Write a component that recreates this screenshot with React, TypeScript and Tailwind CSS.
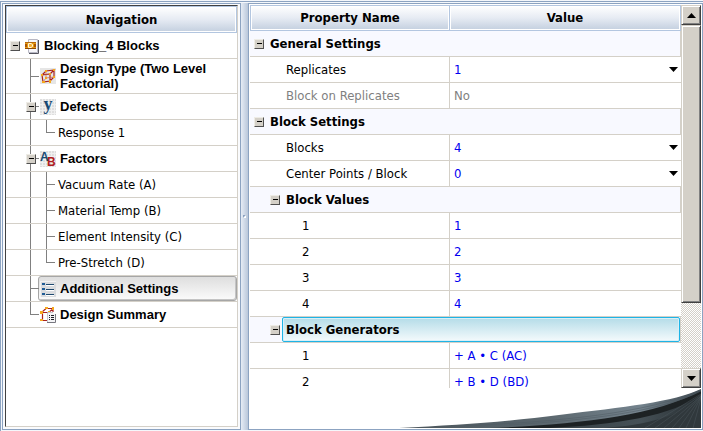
import type { ReactNode } from "react";

const uiFont = "font-['DejaVu_Sans_Condensed','DejaVu_Sans',sans-serif]";
const headerCell =
  "border border-[#b3c6e0] bg-linear-to-b from-white via-[#e6ebf3] to-[#c3cfdf] text-center text-[13px] font-bold shadow-[inset_-1px_-1px_0_#ffffff,inset_1px_1px_0_#ffffff]";

function Toggle({ label }: { label: string }) {
  return (
    <button
      type="button"
      aria-label={`Collapse ${label}`}
      className="flex size-[10px] shrink-0 items-center justify-center border border-t-[#eeece6] border-r-[#505050] border-b-[#505050] border-l-[#eeece6] bg-[#d4d0c8]"
    >
      <span className="h-px w-[5px] bg-black" />
    </button>
  );
}

/* Half-height elbow joining a row to the vertical tree line */
function Elbow({ last = false, children }: { last?: boolean; children?: ReactNode }) {
  return (
    <span className="relative flex w-[9px] shrink-0 flex-col self-stretch">
      <span className="flex-1 border-b border-l border-[#808080]" />
      <span className={last ? "flex-1" : "flex-1 border-l border-[#808080]"} />
      {children && <span className="absolute top-1/2 -left-1 -translate-y-1/2">{children}</span>}
    </span>
  );
}

function Tile() {
  return (
    <>
      <rect width="16" height="16" fill="#dedede" />
      <path
        d="M0 2.5H16M0 5.5H16M0 8.5H16M0 11.5H16M0 14.5H16M2.5 0V16M5.5 0V16M8.5 0V16M11.5 0V16M14.5 0V16"
        stroke="#f0f0f0"
      />
    </>
  );
}

function ProjectIcon() {
  return (
    <svg width="14" height="16" viewBox="0 0 14 16" aria-hidden="true">
      <path d="M3.5 1.5H12.5V14.5H3.5Z" fill="#f7f7fb" stroke="#b8b8c4" />
      <path d="M13.5 2V15.5H4" fill="none" stroke="#55555f" />
      <rect x="0" y="4" width="11" height="7" fill="#e89a10" />
      <rect x="0" y="4" width="11" height="1" fill="#b56a10" />
      <rect x="0" y="10" width="11" height="1" fill="#8f4a08" />
      <rect x="0" y="6" width="2" height="3" fill="#a85408" />
      <rect x="9" y="6" width="2" height="3" fill="#a85408" />
      <path d="M3.5 5.5H6L7.5 6.5V8.5L6 9.5H3.5Z" fill="#f5b030" stroke="#fff6dc" />
    </svg>
  );
}

function CubeIcon() {
  return (
    <svg width="16" height="16" viewBox="0 0 16 16" aria-hidden="true">
      <rect width="16" height="16" fill="#e6e6e6" />
      <path d="M2 7L10 6V13L3 14ZM2 7L6 3L14 2L10 6M14 2V9L10 13" fill="none" stroke="#a82020" strokeWidth="1.2" />
      <path d="M6 3V10L14 9M6 10L3 14" fill="none" stroke="#c86a5a" strokeWidth="0.8" />
      <g fill="#f5a81c">
        <rect x="1" y="6" width="2" height="2" />
        <rect x="9" y="5" width="2" height="2" />
        <rect x="2" y="13" width="3" height="2" />
        <rect x="9" y="12" width="2" height="3" />
        <rect x="5" y="2" width="2" height="2" />
        <rect x="13" y="1" width="2" height="2" />
        <rect x="13" y="8" width="2" height="2" />
        <rect x="5" y="9" width="2" height="2" />
      </g>
    </svg>
  );
}

function ResponseIcon() {
  return (
    <svg width="16" height="16" viewBox="0 0 16 16" aria-hidden="true" className="overflow-visible">
      <Tile />
      <text x="8" y="11" textAnchor="middle" fontFamily="Liberation Serif, serif" fontWeight="bold" fontSize="18" fill="#174a74">
        y
      </text>
    </svg>
  );
}

function FactorsIcon() {
  return (
    <svg width="16" height="16" viewBox="0 0 16 16" aria-hidden="true" className="overflow-visible">
      <Tile />
      <g fontFamily="Liberation Sans, sans-serif" fontWeight="bold" fontSize="12">
        <text x="0" y="10" fill="#174a74">
          A
        </text>
        <text x="7" y="15" fill="#b01c20">
          B
        </text>
      </g>
    </svg>
  );
}

function SettingsIcon() {
  return (
    <svg width="16" height="16" viewBox="0 0 16 16" aria-hidden="true">
      <rect width="16" height="16" fill="#d9dbde" />
      <path d="M0 .5H16M.5 0V16" stroke="#f2f2f2" />
      <path d="M6 3.5H14M6 8.5H14M6 13.5H14" stroke="#1f4a70" />
      <path d="M6 4.5H14M6 9.5H14M6 14.5H14" stroke="#ffffff" />
      <path d="M2 3H5M2 8H5M2 13H5" stroke="#1f5c96" strokeWidth="2" />
    </svg>
  );
}

function SummaryIcon() {
  return (
    <svg width="16" height="16" viewBox="0 0 16 16" aria-hidden="true">
      <path d="M2 5.5H9M2.5 6V13.5H7M2 5L6 1.5H13V5M9 5L13 2" fill="none" stroke="#a82020" strokeWidth="1.2" />
      <g fill="#f5a81c">
        <rect x="0" y="4" width="3" height="3" />
        <rect x="5" y="0" width="3" height="2" />
        <rect x="12" y="0" width="2" height="3" />
        <rect x="8" y="4" width="2" height="2" />
        <rect x="0" y="12" width="3" height="2" />
      </g>
      <path d="M8 6H13L15 7V15H8Z" fill="#f4f4f6" />
      <path d="M7.5 15V5.5H13" fill="none" stroke="#c4c4cc" />
      <path d="M15.5 7V15.5H7" fill="none" stroke="#77777f" />
      <path d="M9 8.5H10M11 8.5H14M9 10.5H10M11 10.5H14M9 12.5H10M11 12.5H14" stroke="#202028" />
    </svg>
  );
}

const treeRow = "flex items-center border-b border-[#d4d0c8]";

type BranchProps = {
  label: string;
  icon: ReactNode;
  toggle?: boolean;
  last?: boolean;
  selected?: boolean;
  tall?: boolean;
  items?: string[];
};

function Branch({ label, icon, toggle, last, selected, tall, items = [] }: BranchProps) {
  return (
    <li>
      <div className={`${treeRow} pl-6 ${tall ? "h-[35px]" : "h-[26px]"}`}>
        <Elbow last={last}>{toggle ? <Toggle label={label} /> : null}</Elbow>
        <button
          type="button"
          className={`flex min-w-0 flex-1 items-center gap-1 self-stretch text-left ${
            selected
              ? "-ml-px rounded-[3px] border border-[#a6a6a6] bg-linear-to-b from-[#dedede] to-[#fbfbfb] pl-px shadow-[inset_-1px_-1px_0_#c4c4c4]"
              : "pl-px"
          }`}
        >
          <span className="shrink-0">{icon}</span>
          <span className="leading-[15px]">{label}</span>
        </button>
      </div>
      {items.length > 0 && (
        <ul className={`${uiFont} font-normal`}>
          {items.map((item, i) => (
            <li key={item} className={`${treeRow} h-[26px] pl-6`}>
              <span className="w-4 shrink-0 self-stretch border-l border-[#808080]" />
              <Elbow last={i === items.length - 1} />
              <button type="button" className="pl-[3px] text-left">
                {item}
              </button>
            </li>
          ))}
        </ul>
      )}
    </li>
  );
}

function Navigation() {
  return (
    <nav
      aria-label="Navigation"
      className="flex w-[239px] shrink-0 flex-col border border-[#8ca3c1] bg-[#fafbfd] pt-px pr-0.5 pb-0.5 pl-0.5"
    >
      <div className="flex-1 overflow-hidden border border-t-[#404040] border-r-[#d4d0c8] border-b-[#d4d0c8] border-l-[#404040] bg-white">
        <h2 className={`${headerCell} ${uiFont} h-[27px] leading-[25px]`}>Navigation</h2>
        <div className="font-['Liberation_Sans',Arial,sans-serif] text-[13px] font-bold">
          <div className={`${treeRow} h-[26px] pl-1`}>
            <Toggle label="Blocking_4 Blocks" />
            <button type="button" className="flex items-center gap-[5px] pl-[5px]">
              <ProjectIcon />
              Blocking_4 Blocks
            </button>
          </div>
          <ul>
            <Branch label="Design Type (Two Level Factorial)" icon={<CubeIcon />} tall />
            <Branch label="Defects" icon={<ResponseIcon />} toggle items={["Response 1"]} />
            <Branch
              label="Factors"
              icon={<FactorsIcon />}
              toggle
              items={["Vacuum Rate (A)", "Material Temp (B)", "Element Intensity (C)", "Pre-Stretch (D)"]}
            />
            <Branch label="Additional Settings" icon={<SettingsIcon />} selected />
            <Branch label="Design Summary" icon={<SummaryIcon />} last />
          </ul>
        </div>
      </div>
    </nav>
  );
}

function Group({ label, nested, selected }: { label: string; nested?: boolean; selected?: boolean }) {
  return (
    <tr>
      <th
        colSpan={2}
        scope="colgroup"
        className="h-[26px] border-r border-b border-[#d4d0c8] bg-[#f8f9ff] p-0 text-left font-bold"
      >
        <div className={`flex h-[25px] items-center ${nested ? "pl-5" : "pl-1"}`}>
          <Toggle label={label} />
          <span
            className={`ml-0.5 flex flex-1 items-center self-stretch ${
              selected
                ? "rounded-[2px] border border-[#1eb4e6] bg-linear-to-b from-[#b4dce8] to-[#f4fafc] pl-[3px] shadow-[inset_0_0_0_1px_#d8f0f8]"
                : "pl-1"
            }`}
          >
            {label}
          </span>
        </div>
      </th>
    </tr>
  );
}

type PropProps = { name: string; value: string; options?: string[]; nested?: boolean; disabled?: boolean };

function Prop({ name, value, options, nested, disabled }: PropProps) {
  const id = name.replace(/[^A-Za-z]+/g, "-").toLowerCase();
  return (
    <tr className={disabled ? "text-[#808080]" : "text-black"}>
      <th
        scope="row"
        className={`h-[26px] border-r border-b border-[#d4d0c8] py-0 text-left font-normal ${nested ? "pl-[52px]" : "pl-9"}`}
      >
        {options ? <label htmlFor={id}>{name}</label> : name}
      </th>
      <td className={`h-[26px] border-b border-[#d4d0c8] p-0 ${disabled ? "" : "text-[#0000f0]"}`}>
        {options ? (
          <div className="flex items-center pr-[3px]">
            <select id={id} defaultValue={value} className="min-w-0 flex-1 appearance-none bg-transparent pl-1 outline-none">
              {options.map((o) => (
                <option key={o}>{o}</option>
              ))}
            </select>
            <svg width="9" height="5" viewBox="0 0 9 5" aria-hidden="true" className="pointer-events-none">
              <path d="M0 0H9L4.5 5Z" fill="#000000" />
            </svg>
          </div>
        ) : (
          <span className="pl-1">{value}</span>
        )}
      </td>
    </tr>
  );
}

const raised =
  "border border-t-[#d4d0c8] border-r-[#404040] border-b-[#404040] border-l-[#d4d0c8] bg-[#d4d0c8] shadow-[inset_1px_1px_0_#ffffff,inset_-1px_-1px_0_#808080]";

function ScrollBar() {
  return (
    <div className="flex w-5 shrink-0 flex-col bg-[repeating-conic-gradient(#d4d0c8_0_25%,#ffffff_0_50%)] bg-size-[2px_2px]">
      <button type="button" aria-label="Scroll up" className={`${raised} flex h-5 shrink-0 items-center justify-center`}>
        <svg width="9" height="5" viewBox="0 0 9 5" aria-hidden="true">
          <path d="M0 5H9L4.5 0Z" fill="#000000" />
        </svg>
      </button>
      <div className="flex flex-1 flex-col">
        <div className={`${raised} h-[81%]`} />
      </div>
      <button type="button" aria-label="Scroll down" className={`${raised} flex h-5 shrink-0 items-center justify-center`}>
        <svg width="9" height="5" viewBox="0 0 9 5" aria-hidden="true">
          <path d="M0 0H9L4.5 5Z" fill="#000000" />
        </svg>
      </button>
    </div>
  );
}

function Swoosh() {
  return (
    <svg width="302" height="40" viewBox="0 0 302 40" aria-hidden="true">
      <defs>
        <linearGradient id="edge" x1="0" x2="1">
          <stop offset="0" stopColor="#4a545a" />
          <stop offset="0.5" stopColor="#5c686f" />
          <stop offset="0.8" stopColor="#74838d" />
          <stop offset="1" stopColor="#3a444b" />
        </linearGradient>
        <linearGradient id="floor" x1="0" x2="1">
          <stop offset="0" stopColor="#363f43" />
          <stop offset="0.6" stopColor="#465157" />
          <stop offset="1" stopColor="#262d31" />
        </linearGradient>
      </defs>
      <path d="M0 40C60 37 115 33 160 27C225 19 275 14 302 1V40Z" fill="url(#edge)" />
      <path d="M90 40C175 37 255 28 302 3V40Z" fill="#1d2224" />
      <path d="M150 40C215 37 275 28 302 6V40Z" fill="url(#floor)" />
      <path d="M205 40C250 37 282 28 302 7V40Z" fill="#30383c" />
      <path
        d="M246 40L302 6M256 40L302 7M265 40L302 8M273 40L302 8M280 40L302 9M287 40L302 9M294 40L302 10"
        stroke="#4c575d"
        strokeWidth="0.5"
        fill="none"
      />
      <path d="M60 38C160 34 250 25 302 2M110 37C190 32 260 24 302 3" stroke="#4f5b63" strokeWidth="0.5" fill="none" />
    </svg>
  );
}

function PropertyGrid() {
  return (
    <main className="flex min-w-0 flex-1 flex-col border border-[#8ca3c1] bg-white p-px">
      <div className="flex min-h-0 flex-1">
        <div className="min-w-0 flex-1 overflow-hidden">
          <table className="w-full table-fixed border-separate border-spacing-0 text-[13px] leading-4">
            <colgroup>
              <col className="w-[200px]" />
              <col />
            </colgroup>
            <thead>
              <tr>
                <th scope="col" className={`${headerCell} h-[26px] p-0`}>
                  Property Name
                </th>
                <th scope="col" className={`${headerCell} h-[26px] border-l-0 p-0`}>
                  Value
                </th>
              </tr>
            </thead>
            <tbody>
              <Group label="General Settings" />
              <Prop name="Replicates" value="1" options={["1", "2", "3", "4"]} />
              <Prop name="Block on Replicates" value="No" disabled />
              <Group label="Block Settings" />
              <Prop name="Blocks" value="4" options={["1", "2", "4", "8"]} />
              <Prop name="Center Points / Block" value="0" options={["0", "1", "2", "3"]} />
              <Group label="Block Values" nested />
              <Prop name="1" value="1" nested />
              <Prop name="2" value="2" nested />
              <Prop name="3" value="3" nested />
              <Prop name="4" value="4" nested />
              <Group label="Block Generators" nested selected />
              <Prop name="1" value="+ A • C (AC)" nested />
              <Prop name="2" value="+ B • D (BD)" nested />
            </tbody>
          </table>
        </div>
        <ScrollBar />
      </div>
      <footer className="flex h-10 shrink-0 justify-end overflow-hidden">
        <Swoosh />
      </footer>
    </main>
  );
}

export default function App() {
  return (
    <div className={`flex h-screen flex-col bg-[#f4f7fb] pt-px text-black ${uiFont}`}>
      <div className="flex min-h-0 flex-1 border-t border-l border-[#8ca3c1] pt-px pb-px pl-px">
        <Navigation />
        <div
          role="separator"
          aria-orientation="vertical"
          className="flex w-[7px] shrink-0 items-center justify-center bg-linear-to-r from-[#e6ecf5] to-[#b9c7da]"
        >
          <span className="size-[3px] border border-t-[#8ca3c1] border-r-white border-b-white border-l-[#8ca3c1]" />
        </div>
        <PropertyGrid />
      </div>
    </div>
  );
}
